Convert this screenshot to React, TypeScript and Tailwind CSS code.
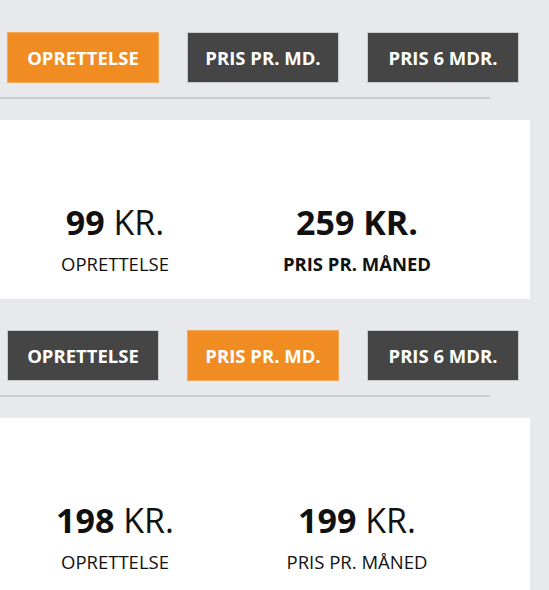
const font = { fontFamily: '"Open Sans", "Noto Sans", sans-serif' };

type Tab = "OPRETTELSE" | "PRIS PR. MD." | "PRIS 6 MDR.";

function Tabs({ active }: { active: Tab }) {
  const tabs: Tab[] = ["OPRETTELSE", "PRIS PR. MD.", "PRIS 6 MDR."];
  return (
    <div className="flex gap-[28px] pl-[7px]">
      {tabs.map((t) => (
        <button
          key={t}
          className={
            t === active
              ? "flex h-[51px] w-[152px] items-center justify-center border border-[#f4a957] bg-[#f08c22] text-[18.5px] font-bold text-white"
              : "flex h-[51px] w-[152px] items-center justify-center border border-[#c9c9cc] bg-[#454545] text-[18.5px] font-bold text-white"
          }
        >
          {t}
        </button>
      ))}
    </div>
  );
}

function Price({
  amount,
  label,
  strong,
}: {
  amount: string;
  label: string;
  strong?: boolean;
}) {
  return (
    <div className="flex w-[230px] flex-col items-center text-[#111]">
      <div className="text-[34px] leading-[40px]">
        <span className="font-bold">{amount}</span>{" "}
        <span className={strong ? "font-bold" : "font-normal"}>KR.</span>
      </div>
      <div
        className={
          strong
            ? "mt-[10px] text-[18.5px] font-bold leading-[24px]"
            : "mt-[10px] text-[18.5px] leading-[24px]"
        }
      >
        {label}
      </div>
    </div>
  );
}

function Section({
  active,
  first,
  second,
}: {
  active: Tab;
  first: { amount: string; label: string; strong?: boolean };
  second: { amount: string; label: string; strong?: boolean };
}) {
  return (
    <section className="pt-[32px] [&:not(:first-child)]:pt-[31px]">
      <Tabs active={active} />
      <div className="mt-[14px] h-[2px] w-[490px] bg-[#cbcbcd]" />
      <div className="mt-[21px] flex h-[179px] w-[530px] gap-3 bg-white pt-[82px]">
        <Price {...first} />
        <Price {...second} />
      </div>
    </section>
  );
}

export default function App() {
  return (
    <main className="min-h-screen overflow-hidden bg-[#e8e9ed]" style={font}>
      <Section
        active="OPRETTELSE"
        first={{ amount: "99", label: "OPRETTELSE" }}
        second={{ amount: "259", label: "PRIS PR. MÅNED", strong: true }}
      />
      <Section
        active="PRIS PR. MD."
        first={{ amount: "198", label: "OPRETTELSE" }}
        second={{ amount: "199", label: "PRIS PR. MÅNED" }}
      />
    </main>
  );
}
